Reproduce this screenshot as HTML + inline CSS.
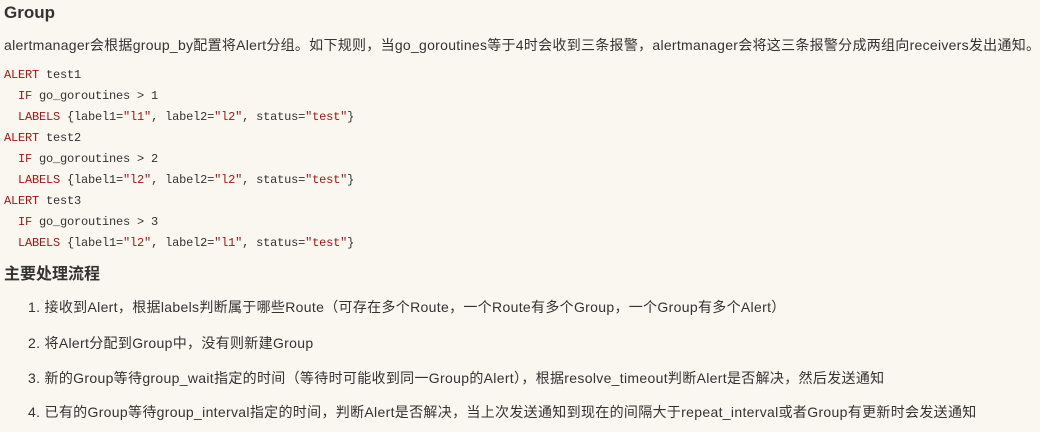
<!DOCTYPE html>
<html><head><meta charset="utf-8"><style>
body{margin:0;background:#faf7f0;color:#333;font-family:"Liberation Sans","Noto Sans CJK SC",sans-serif;width:1040px;height:432px;overflow:hidden}
h2{font-size:17px;font-weight:bold;margin:0;position:absolute;left:4px;top:2px;line-height:22px}
p{position:absolute;left:4px;top:34px;margin:0;font-size:14px;line-height:22px;white-space:nowrap;letter-spacing:0.28px}
pre{position:absolute;left:4px;top:65px;margin:0;font-family:"Liberation Mono",monospace;font-size:12px;line-height:21px;color:#333;letter-spacing:-0.2px}
.k{color:#a31515}
h3{position:absolute;left:4px;top:264px;margin:0;font-size:16px;font-weight:bold;line-height:22px}
.li{position:absolute;left:28px;font-size:14px;line-height:22px;white-space:nowrap;letter-spacing:0.32px}
</style></head><body>
<h2>Group</h2>
<p>alertmanager会根据group_by配置将Alert分组。如下规则，当go_goroutines等于4时会收到三条报警，alertmanager会将这三条报警分成两组向receivers发出通知。</p>
<pre><span class="k">ALERT</span> test1
  <span class="k">IF</span> go_goroutines &gt; 1
  <span class="k">LABELS</span> {label1=<span class="k">"l1"</span>, label2=<span class="k">"l2"</span>, status=<span class="k">"test"</span>}
<span class="k">ALERT</span> test2
  <span class="k">IF</span> go_goroutines &gt; 2
  <span class="k">LABELS</span> {label1=<span class="k">"l2"</span>, label2=<span class="k">"l2"</span>, status=<span class="k">"test"</span>}
<span class="k">ALERT</span> test3
  <span class="k">IF</span> go_goroutines &gt; 3
  <span class="k">LABELS</span> {label1=<span class="k">"l2"</span>, label2=<span class="k">"l1"</span>, status=<span class="k">"test"</span>}</pre>
<h3>主要处理流程</h3>
<div class="li" style="top:296px">1. 接收到Alert，根据labels判断属于哪些Route（可存在多个Route，一个Route有多个Group，一个Group有多个Alert）</div>
<div class="li" style="top:332px">2. 将Alert分配到Group中，没有则新建Group</div>
<div class="li" style="top:367px">3. 新的Group等待group_wait指定的时间（等待时可能收到同一Group的Alert），根据resolve_timeout判断Alert是否解决，然后发送通知</div>
<div class="li" style="top:401px">4. 已有的Group等待group_interval指定的时间，判断Alert是否解决，当上次发送通知到现在的间隔大于repeat_interval或者Group有更新时会发送通知</div>
</body></html>
